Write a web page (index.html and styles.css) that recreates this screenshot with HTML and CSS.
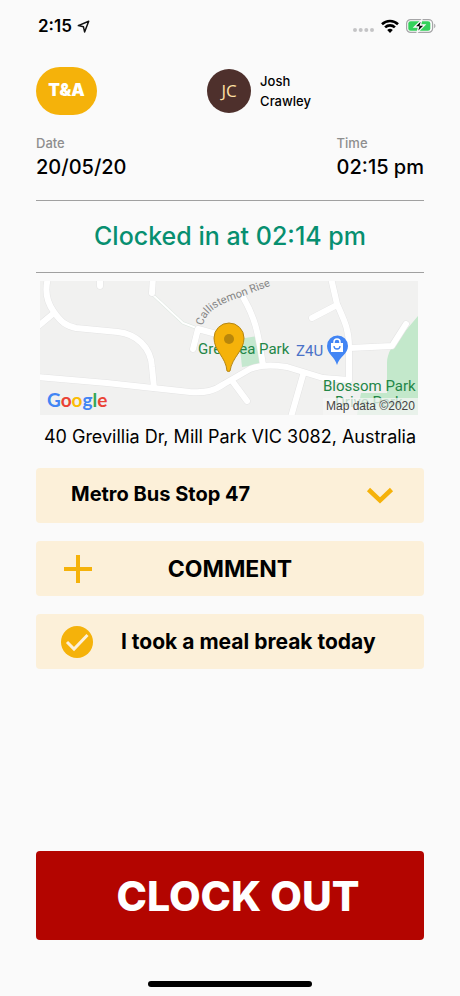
FILE: index.html
```
<!DOCTYPE html>
<html lang="en">
<head>
    <meta charset="UTF-8">
    <meta name="viewport" content="width=device-width, initial-scale=1.0">
    <title>T&amp;A - Clock Out</title>
    <link rel="stylesheet" href="styles.css">
</head>
<body>
    <div class="status-bar">
        <div class="status-time">
            <span>2:15</span>
            <svg width="13" height="13" viewBox="0 0 13 13"><path d="M11.7 1.2 1.3 5.6l5.1 1.1 1.2 5.2z" fill="none" stroke="#111" stroke-width="1.5" stroke-linejoin="round"/></svg>
        </div>
        <div class="status-icons">
            <svg width="21" height="16" viewBox="0 0 21 16" fill="#c4c4c6">
                <circle cx="2" cy="12" r="2"/><circle cx="7.7" cy="12" r="2"/><circle cx="13.3" cy="12" r="2"/><circle cx="19" cy="12" r="2"/>
            </svg>
            <svg width="18" height="16" viewBox="0 0 18 16">
                <path d="M1 6.2a11.6 11.6 0 0 1 16 0M4.1 9.4a7 7 0 0 1 9.8 0" fill="none" stroke="#000" stroke-width="2.6"/>
                <path d="M6.2 12a4.1 4.1 0 0 1 5.6 0L9 15z"/>
            </svg>
            <svg width="30" height="16" viewBox="0 0 30 16">
                <rect x="0.6" y="1.6" width="26" height="12.8" rx="4" fill="none" stroke="#a5a5a7" stroke-width="1.2"/>
                <path d="M28.2 5.8c1.6.6 1.6 3.8 0 4.4z" fill="#a5a5a7"/>
                <rect x="2.3" y="3.3" width="22" height="9.4" rx="2.3" fill="#34d15b"/>
                <path d="M15.8 1.8 8.300 9h4.300l-1.500 5.600L18.800 7h-4.400z" fill="#000" stroke="#fafafa" stroke-width="1.3"/>
            </svg>
        </div>
    </div>

    <header class="header">
        <a class="logo" href="#">T&amp;A</a>
        <div class="user">
            <span class="avatar">JC</span>
            <span class="user-name">Josh<br>Crawley</span>
        </div>
    </header>

    <main class="content">
        <div class="date-time">
            <div>
                <div class="label">Date</div>
                <div class="value">20/05/20</div>
            </div>
            <div>
                <div class="label">Time</div>
                <div class="value">02:15 pm</div>
            </div>
        </div>

        <h1 class="clock-status">Clocked in at 02:14 pm</h1>

        <svg class="map" viewBox="0 0 378 134" role="img" aria-label="Map of 40 Grevillia Dr">
            <defs>
                <!-- same roads drawn twice: grey casing, then white -->
                <g id="roads" fill="none" stroke-linecap="round" stroke-linejoin="round">
                    <path d="M8-3C4 12 8 23 14 31c7 10 12 14 22 16l42 4c18 2 33 15 34 35l2 21"/>
                    <path d="M-3 46 14 32M60-3v8M113-4l-1 16M158 48l-5 20M158 48l22 6"/>
                    <path d="M-3 96 67 102l46 5 37 4c16 1 24-1 34-8l26-15c12-5 25-4 37-2l36 11 26 2V66c0-17-4-25-12-43l-6-26"/>
                    <path d="M203 16c12 21 15 34 20 68M297 24l-25 13M310 67l42-2 14-22M193 101l14 19M263 94l-12 42"/>
                </g>
            </defs>
            <rect width="378" height="134" fill="#f1f1f0"/>
            <path d="M199 58l18-3 5 28-20 3z" fill="#c5e8cf"/>
            <path d="M378 35 362 54c-9 9-15 18-15 28v30h-26l-4 22h61z" fill="#c3e8cb"/>
            <path d="M112 13l31 29 16 6" fill="none" stroke="#dce7df" stroke-width="3"/>
            <path d="M112 13l31 29 16 6" fill="none" stroke="#fff" stroke-width="2"/>
            <use href="#roads" stroke="#e4e4e4" stroke-width="7"/>
            <use href="#roads" stroke="#fff" stroke-width="6"/>

            <path id="rise" d="M163 45C165 33 174 26 190 20L222 8 250-3" fill="none"/>
            <text class="map-street"><textPath href="#rise">Callistemon Rise</textPath></text>
            <text class="map-park" x="158" y="73">Grevillea Park</text>
            <text class="map-place" x="256" y="75">Z4U</text>
            <text class="map-park" x="283" y="110">Blossom Park</text>
            <text class="map-park" x="295" y="126">Drive Park</text>

            <path d="M297 84c-2-8-10-11-10-19a10.500 10.500 0 0 1 21 0c0 8-9 11-11 19z" fill="#4285f4"/>
            <path d="M291 62h12v9h-12z" fill="#fff"/>
            <path d="M294 62v-1a3 3 0 0 1 6 0v1" fill="none" stroke="#fff" stroke-width="1.5"/>
            <path d="M294 65a3 3 0 0 0 6 0" fill="none" stroke="#4285f4" stroke-width="1.3"/>

            <path d="M187 90c-1-14-13-20-13-33a15 15 0 0 1 30 0c0 13-12 19-14 33q-1 1-3 0z" fill="#f5b20a" stroke="#b58613" stroke-width="1"/>
            <circle cx="189" cy="58" r="5" fill="#b8860b"/>

            <rect x="283" y="117" width="95" height="17" fill="#f5f5f5" fill-opacity="0.75"/>
            <text class="map-credit" x="286" y="129">Map data ©2020</text>
            <text class="map-logo" x="7" y="126"><tspan fill="#4285f4">G</tspan><tspan fill="#ea4335">o</tspan><tspan fill="#fbbc05">o</tspan><tspan fill="#4285f4">g</tspan><tspan fill="#34a853">l</tspan><tspan fill="#ea4335">e</tspan></text>
        </svg>
        <p class="address">40 Grevillia Dr, Mill Park VIC 3082, Australia</p>

        <form class="actions">
            <div class="select-wrap">
                <select class="row stop-select" aria-label="Location">
                    <option>Metro Bus Stop 47</option>
                </select>
                <svg class="chevron" width="28" height="18" viewBox="0 0 28 18"><path d="M2.5 2.5 14 13.5l11.5-11" fill="none" stroke="#f5b20a" stroke-width="4.500"/></svg>
            </div>

            <button class="row comment-btn" type="button">
                <svg width="30" height="30" viewBox="0 0 30 30"><path d="M15 1v28M1 15h28" stroke="#f5b20a" stroke-width="4"/></svg>
                <span>COMMENT</span>
            </button>

            <label class="row break-row" for="meal-break">
                <span class="check">
                    <input type="checkbox" id="meal-break" checked>
                    <svg width="32" height="32" viewBox="0 0 32 32"><path d="M6 16l7 7L26.500 9" fill="none" stroke="#fdf0d9" stroke-width="3"/></svg>
                </span>
                <span>I took a meal break today</span>
            </label>

            <button class="clock-out" type="submit">CLOCK OUT</button>
        </form>
    </main>

    <div class="home-indicator"></div>
</body>
</html>
```
FILE: styles.css
```
* {
    box-sizing: border-box;
}
body {
    font-family: Inter, "Liberation Sans", sans-serif;
    margin: 0;
    min-height: 100vh;
    display: flex;
    flex-direction: column;
    background: #fafafa;
    color: #000;
}
.status-bar {
    display: flex;
    justify-content: space-between;
    align-items: center;
    height: 52px;
    padding: 0 24px 0 38px;
}
.status-time {
    display: flex;
    align-items: center;
    gap: 5px;
    font-size: 17px;
    font-weight: 600;
}
.status-icons {
    display: flex;
    align-items: center;
    gap: 7px;
}
.header {
    display: grid;
    grid-template-columns: 1fr auto 1fr;
    align-items: center;
    padding: 15px 36px 0;
}
.logo {
    justify-self: start;
    width: 61px;
    height: 48px;
    border-radius: 24px;
    background: #f5b20a;
    color: #fff;
    font-size: 17px;
    font-weight: 900;
    line-height: 46px;
    text-align: center;
    text-decoration: none;
}
.user {
    display: flex;
    align-items: center;
    gap: 9px;
    margin-left: 58px;
}
.avatar {
    width: 44px;
    height: 44px;
    border-radius: 50%;
    background: #4e302c;
    color: #ffe0a5;
    font-family: "Open Sans", sans-serif;
    font-size: 17px;
    line-height: 44px;
    text-align: center;
}
.user-name {
    font-size: 13px;
    font-weight: 500;
    line-height: 20px;
}
.content {
    flex: 1;
    display: flex;
    flex-direction: column;
    padding: 18px 36px 0;
}
.date-time {
    display: flex;
    justify-content: space-between;
    padding-bottom: 19px;
    border-bottom: 1px solid #a0a0a0;
}
.label {
    color: #8e8e8e;
    font-size: 13px;
    font-weight: 500;
    line-height: 20px;
}
.value {
    font-size: 20px;
    font-weight: 500;
    line-height: 28px;
}
.clock-status {
    margin: 0;
    border-bottom: 1px solid #a0a0a0;
    color: #078f70;
    font-size: 25px;
    font-weight: 500;
    line-height: 71px;
    text-align: center;
}
.map {
    display: block;
    margin: 8px 6px 0 4px;
}
.map-street {
    fill: #858585;
    font-family: Roboto, sans-serif;
    font-size: 11px;
}
.map-park {
    fill: #238647;
    font-family: Roboto, sans-serif;
    font-size: 15px;
}
.map-place {
    fill: #4a72c8;
    font-family: Roboto, sans-serif;
    font-size: 15px;
}
.map-credit {
    fill: #444;
    font-family: "Liberation Sans", sans-serif;
    font-size: 12px;
}
.map-logo {
    font-family: Lato, sans-serif;
    font-size: 19px;
    font-weight: 700;
}
.address {
    margin: 11px 0 20px;
    font-size: 18px;
    line-height: 22px;
    text-align: center;
}
.actions {
    flex: 1;
    display: flex;
    flex-direction: column;
    gap: 18px;
}
.row {
    width: 100%;
    height: 55px;
    border: 0;
    border-radius: 4px;
    background: #fcf0d9;
    color: #000;
    font-family: inherit;
    font-size: 21px;
    font-weight: 700;
}
.select-wrap {
    display: grid;
    align-items: center;
}
.select-wrap > * {
    grid-area: 1 / 1;
}
.stop-select {
    appearance: none;
    padding: 0 64px 3px 35px;
    font-size: 20px;
}
.chevron {
    justify-self: end;
    margin-right: 30px;
    pointer-events: none;
}
.comment-btn {
    display: grid;
    grid-template-columns: 30px 1fr 30px;
    align-items: center;
    padding: 0 27px;
    font-size: 23px;
}
.break-row {
    display: flex;
    align-items: center;
    gap: 28px;
    padding: 0 25px;
}
.check {
    display: grid;
}
.check > * {
    grid-area: 1 / 1;
}
.check input {
    appearance: none;
    width: 32px;
    height: 32px;
    margin: 0;
    border-radius: 50%;
    background: #f5b20a;
}
.check svg {
    pointer-events: none;
}
.clock-out {
    height: 89px;
    margin-top: auto;
    padding: 0 0 0 16px;
    border: 0;
    border-radius: 4px;
    background: #b30500;
    color: #fff;
    font-family: inherit;
    font-size: 41px;
    font-weight: 800;
}
.home-indicator {
    width: 164px;
    height: 6px;
    margin: 41px auto 9px;
    border-radius: 3px;
    background: #000;
}
```
